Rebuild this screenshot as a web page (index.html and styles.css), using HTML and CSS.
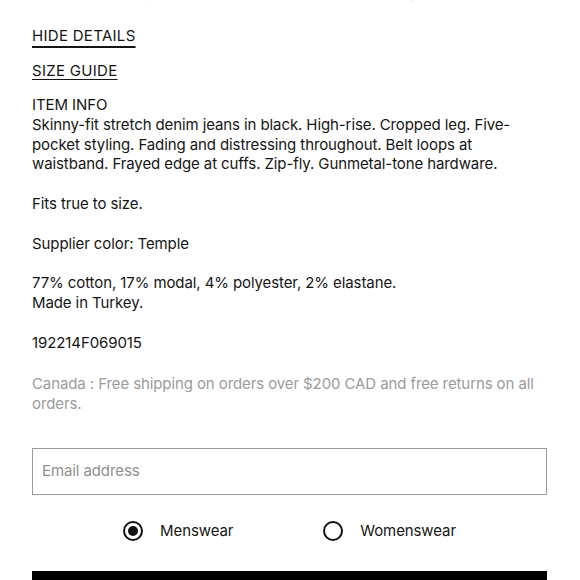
FILE: index.html
```html
<!DOCTYPE html>
<html lang="en">
<head>
<meta charset="utf-8">
<title>Item details</title>
<link rel="stylesheet" href="styles.css">
</head>
<body>
<main class="page">
  <p class="clipped">Model is wearing a pair of jeans, shop the complete style</p>
  <a class="link link-strong" href="#">HIDE DETAILS</a>
  <a class="link" href="#">SIZE GUIDE</a>
  <div class="info">
    <p>ITEM INFO<br>Skinny-fit stretch denim jeans in black. High-rise. Cropped leg. Five-pocket styling. Fading and distressing throughout. Belt loops at waistband. Frayed edge at cuffs. Zip-fly. Gunmetal-tone hardware.</p>
    <p>Fits true to size.</p>
    <p>Supplier color: Temple</p>
    <p>77% cotton, 17% modal, 4% polyester, 2% elastane.<br>Made in Turkey.</p>
    <p>192214F069015</p>
  </div>
  <p class="shipping">Canada : Free shipping on orders over $200 CAD and free returns on all orders.</p>
  <div class="email">Email address</div>
  <div class="radios">
    <label class="radio"><span class="dot dot-on"></span><span>Menswear</span></label>
    <label class="radio"><span class="dot"></span><span>Womenswear</span></label>
  </div>
  <div class="button"></div>
</main>
</body>
</html>
```

FILE: styles.css
```css
html, body {
  margin: 0;
  padding: 0;
  background: #fff;
}
body {
  font-family: Inter, "Liberation Sans", Arial, sans-serif;
  font-size: 15px;
  line-height: 19.8px;
  letter-spacing: -0.1px;
  color: #151515;
  overflow: hidden;
}
.page {
  padding: 0 33px 0 32px;
  display: flex;
  flex-direction: column;
  align-items: flex-start;
}
.clipped {
  margin: -18px 0 0;
  line-height: 20px;
  color: #444;
}
.link {
  display: block;
  color: #151515;
  letter-spacing: 0.3px;
  text-decoration: underline;
  text-decoration-thickness: 1px;
  text-underline-offset: 3px;
  line-height: 20px;
}
.link-strong {
  margin-top: 24px;
  text-decoration-thickness: 2px;
  text-underline-offset: 5px;
}
.link + .link {
  margin-top: 15px;
}
.info {
  margin-top: 14px;
}
.info p {
  margin: 0 0 19.8px;
}
.shipping {
  margin: 2px 0 0;
  color: #9b9b9b;
}
.email {
  align-self: stretch;
  margin-top: 34px;
  height: 45px;
  border: 1px solid #9a9a9a;
  box-sizing: content-box;
  padding: 0 9px;
  display: flex;
  align-items: center;
  color: #8f8f8f;
  font-size: 15px;
}
.radios {
  align-self: stretch;
  display: flex;
  justify-content: center;
  gap: 90px;
  margin-top: 26px;
  height: 20px;
}
.radio {
  display: flex;
  align-items: center;
  gap: 17px;
  color: #151515;
}
.dot {
  width: 16px;
  height: 16px;
  border: 2px solid #111;
  border-radius: 50%;
  position: relative;
  flex: none;
}
.dot-on::after {
  content: "";
  position: absolute;
  left: 3px;
  top: 3px;
  width: 10px;
  height: 10px;
  border-radius: 50%;
  background: #111;
}
.button {
  align-self: stretch;
  margin-top: 30px;
  height: 40px;
  background: #000;
}
```
